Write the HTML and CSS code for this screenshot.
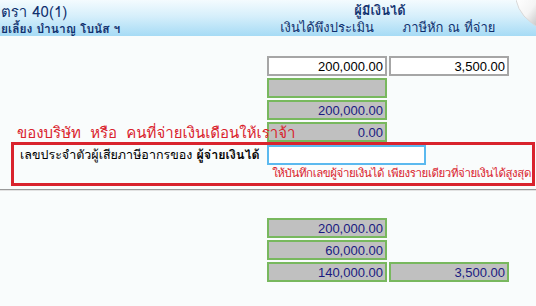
FILE: index.html
```html
<!DOCTYPE html>
<html lang="th">

<head>
    <meta charset="UTF-8">
    <title>เงินได้ตามมาตรา 40(1)</title>
    <link rel="stylesheet" href="styles.css">
</head>

<body>
    <div class="header">
        <div class="title">
            <div class="title-main">ตรา 40(1)</div>
            <div class="title-sub">ยเลี้ยง บำนาญ โบนัส ฯ</div>
        </div>
        <div class="heads">
            <div class="head-main">ผู้มีเงินได้</div>
            <div class="head-col">เงินได้พึงประเมิน</div>
            <div class="head-col">ภาษีหัก ณ ที่จ่าย</div>
        </div>
        <svg class="curl" width="20" height="26" viewBox="0 0 20 26">
            <defs>
                <linearGradient id="fold" x1="0" y1="0" x2="1" y2="1">
                    <stop offset="0" stop-color="#ffffff" />
                    <stop offset="0.55" stop-color="#f4f4f4" />
                    <stop offset="1" stop-color="#c9c9c9" />
                </linearGradient>
            </defs>
            <path d="M0,0 L20,0 L20,26 Q14,22 8,16 Q2,9 0,0 Z" fill="url(#fold)" />
            <path d="M0,0 Q2,9 8,16 Q14,22 20,26" fill="none" stroke="#d8d8d8" stroke-width="1" />
        </svg>
    </div>

    <div class="grid top">
        <div></div>
        <input class="box" type="text" value="200,000.00">
        <input class="box" type="text" value="3,500.00">

        <div></div>
        <input class="box ro" type="text" value="" readonly>
        <div></div>

        <div></div>
        <input class="box ro" type="text" value="200,000.00" readonly>
        <div></div>

        <input class="box ro row4" type="text" value="0.00" readonly>
        <div class="note row4">ของบริษัท&nbsp; หรือ&nbsp; คนที่จ่ายเงินเดือนให้เราจ้า</div>
    </div>

    <div class="payer">
        <div class="payer-row">
            <label class="payer-label" for="payerId">เลขประจำตัวผู้เสียภาษีอากรของ <b>ผู้จ่ายเงินได้</b></label>
            <input class="payer-input" id="payerId" type="text" autofocus>
        </div>
        <div class="payer-hint">ให้บันทึกเลขผู้จ่ายเงินได้ เพียงรายเดียวที่จ่ายเงินได้สูงสุด</div>
    </div>

    <div class="rule"></div>

    <div class="grid bottom">
        <div></div>
        <input class="box ro" type="text" value="200,000.00" readonly>
        <div></div>

        <div></div>
        <input class="box ro" type="text" value="60,000.00" readonly>
        <div></div>

        <div></div>
        <input class="box ro" type="text" value="140,000.00" readonly>
        <input class="box ro" type="text" value="3,500.00" readonly>
    </div>
</body>

</html>
```

FILE: styles.css
```css
body {
    margin: 0;
    background-color: #f9fcfc;
    font-family: Tahoma, "Loma", "Garuda", "Noto Sans Thai", "Noto Sans Thai UI", "Liberation Sans", sans-serif;
    font-size: 13px;
    color: #000;
    overflow: hidden;
}

.header {
    position: relative;
    height: 36px;
    display: flex;
    background: linear-gradient(to bottom, #f4fbfe 0%, #d6effb 45%, #a6dbf5 100%);
    color: #10306e;
}

.title {
    width: 266px;
    padding-top: 4px;
    padding-left: 1px;
}

.title-main {
    font-size: 15px;
    line-height: 16px;
}

.title-sub {
    margin-top: 3px;
    font-weight: bold;
    font-size: 12px;
    line-height: 12px;
}

.heads {
    display: grid;
    grid-template-columns: 120px 120px;
    column-gap: 2px;
    padding-top: 2px;
}

.head-main {
    grid-column: 1 / span 2;
    text-align: center;
    font-weight: bold;
    line-height: 15px;
    padding-right: 16px;
    padding-top: 1px;
}

.head-col {
    text-align: center;
    line-height: 15px;
}

.curl {
    position: absolute;
    top: 0;
    right: 0;
}

.grid {
    display: grid;
    grid-template-columns: 265px 120px 120px;
    column-gap: 2px;
    row-gap: 2px;
}

.top {
    margin-top: 20px;
}

.bottom {
    margin-top: 27px;
}

.box {
    box-sizing: border-box;
    height: 20px;
    margin: 0;
    padding: 0 2px;
    border: 2px solid #a6a6a6;
    background-color: #fff;
    font-family: "Liberation Sans", Arial, sans-serif;
    font-size: 13px;
    color: #000;
    text-align: right;
    outline: none;
}

.box.ro {
    border-color: #78b85e;
    background-color: #c0c0c0;
    color: #1a1a80;
}

.row4 {
    grid-row: 4;
    grid-column: 2;
}

.note.row4 {
    grid-column: 1 / span 2;
    padding-left: 17px;
    align-self: end;
    white-space: nowrap;
    color: #d9232d;
    font-size: 15px;
    line-height: 18px;
}

.payer {
    margin: 0 1px 0 11px;
    height: 38px;
    border: 3px solid #d9232d;
}

.payer-row {
    display: flex;
    align-items: center;
}

.payer-label {
    width: 247px;
    padding-left: 6px;
    white-space: nowrap;
    font-size: 12.5px;
}

.payer-input {
    box-sizing: border-box;
    width: 159px;
    height: 20px;
    margin: 0;
    border: 2px solid #5bb9ef;
    background-color: #fff;
    outline: none;
    font-family: "Liberation Sans", Arial, sans-serif;
    font-size: 13px;
}

.payer-hint {
    text-align: right;
    color: #d9232d;
    padding-right: 1px;
    font-size: 11.5px;
    letter-spacing: -0.4px;
    line-height: 17px;
}

.rule {
    margin-top: 3px;
    height: 1px;
    background-color: #9a9a9a;
    border-bottom: 1px solid #e2e2e2;
}
```
